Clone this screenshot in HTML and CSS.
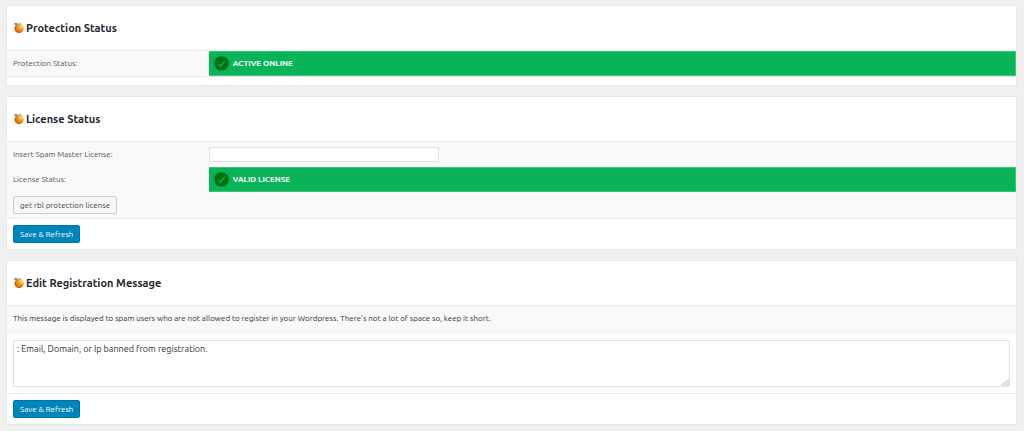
FILE: index.html
```html
<!DOCTYPE html>
<html lang="en">
<head>
    <meta charset="UTF-8">
    <meta name="viewport" content="width=device-width, initial-scale=1.0">
    <title>Spam Master Settings</title>
    <link rel="stylesheet" href="styles.css">
</head>
<body>
    <svg class="symbols" aria-hidden="true">
        <defs>
            <radialGradient id="peel" cx="0.7" cy="0.3" r="0.8">
                <stop offset="0" stop-color="#ffc93a"/>
                <stop offset="0.5" stop-color="#f08a20"/>
                <stop offset="1" stop-color="#c4500f"/>
            </radialGradient>
        </defs>
        <symbol id="orange" viewBox="0 0 20 24">
            <circle cx="11" cy="12" r="8.6" fill="url(#peel)"/>
            <path d="M12 7c3 0 5 2 5 5" fill="none" stroke="#ffdc7a" stroke-width="2"/>
            <path d="M10 5C8 1 4 0 1 4c3 2 6 3 9 1z" fill="#7fa67c"/>
            <path d="M10 5c0-3 3-4 5-3-1 3-2 4-5 3z" fill="#b5bd80"/>
        </symbol>
        <symbol id="check" viewBox="0 0 16 16">
            <circle cx="8" cy="8" r="7.8" fill="#04700f"/>
            <path d="M4.5 8.5l2.3 2.7 4.7-6" fill="none" stroke="#08b457" stroke-width="1.3"/>
        </symbol>
    </svg>

    <section class="panel">
        <header class="panel-header">
            <svg class="logo"><use href="#orange"/></svg>
            <h2>Protection Status</h2>
        </header>
        <div class="panel-body">
            <div class="row">
                <span class="label">Protection Status:</span>
                <div class="status"><svg class="check"><use href="#check"/></svg>ACTIVE ONLINE</div>
            </div>
        </div>
        <footer class="panel-footer empty"></footer>
    </section>

    <form class="panel">
        <header class="panel-header">
            <svg class="logo"><use href="#orange"/></svg>
            <h2>License Status</h2>
        </header>
        <div class="panel-body">
            <div class="row">
                <label class="label" for="license">Insert Spam Master License:</label>
                <input class="text-input" type="text" id="license">
            </div>
            <div class="row">
                <span class="label">License Status:</span>
                <div class="status"><svg class="check"><use href="#check"/></svg>VALID LICENSE</div>
            </div>
            <div class="actions">
                <button type="button" class="button">get rbl protection license</button>
            </div>
        </div>
        <footer class="panel-footer">
            <button type="submit" class="button primary">Save &amp; Refresh</button>
        </footer>
    </form>

    <form class="panel">
        <header class="panel-header">
            <svg class="logo"><use href="#orange"/></svg>
            <h2>Edit Registration Message</h2>
        </header>
        <div class="panel-body">
            <label class="description" for="message">This message is displayed to spam users who are not allowed to register in your Wordpress. There's not a lot of space so, keep it short.</label>
        </div>
        <div class="message">
            <textarea id="message">: Email, Domain, or Ip banned from registration.</textarea>
        </div>
        <footer class="panel-footer">
            <button type="submit" class="button primary">Save &amp; Refresh</button>
        </footer>
    </form>
</body>
</html>
```
FILE: styles.css
```css
* {
    box-sizing: border-box;
}
body {
    margin: 0;
    padding: 5px 7px 6px 6px;
    background: #f0f0f0;
    color: #333;
    font-family: Ubuntu, "Noto Sans", sans-serif;
    font-size: 8px;
    line-height: 12px;
}
.symbols {
    display: block;
    width: 0;
    height: 0;
}
.panel {
    margin: 0 0 10px;
    background: #fff;
    border: 1px solid #e8e8e8;
}
.panel-header {
    display: flex;
    align-items: center;
    gap: 2px;
    height: 45px;
    padding: 0 6px;
    border-bottom: 1px solid #ebebeb;
}
.panel-header h2 {
    margin: 0;
    color: #23282d;
    font-size: 11px;
    line-height: 16px;
}
.logo {
    width: 11px;
    height: 13px;
}
.panel-body {
    background: #f9f9f9;
}
.row {
    display: grid;
    grid-template-columns: 20% 1fr;
    align-items: center;
    min-height: 25px;
}
.label {
    padding-left: 6px;
    color: #555;
}
.status {
    display: flex;
    align-items: center;
    gap: 4px;
    height: 25px;
    padding-left: 5px;
    background: #08b457;
    border: 1px solid #3cc279;
    border-left: 0;
    color: #fff;
    font-weight: bold;
}
.check {
    width: 15px;
    height: 15px;
}
.text-input {
    width: 230px;
    height: 15px;
    padding: 0 3px;
    background: #fff;
    border: 1px solid #e3e3e3;
    font: inherit;
}
.actions {
    padding: 4px 6px;
}
.button {
    display: block;
    height: 18px;
    padding: 2px 6px 0;
    background: #f7f7f7;
    border: 1px solid #ccc;
    border-radius: 2px;
    color: #444;
    font: inherit;
    cursor: pointer;
}
.button.primary {
    background: #0085ba;
    border-color: #0073aa;
    color: #fff;
}
.panel-footer {
    padding: 6px;
    border-top: 1px solid #ebebeb;
}
.panel-footer.empty {
    padding: 4px;
}
.description {
    display: block;
    padding: 7px 6px 10px;
}
.message {
    padding: 5px 6px 6px;
}
.message textarea {
    display: block;
    width: 100%;
    height: 47px;
    padding: 2px 3px;
    background: #fff;
    border: 1px solid #e3e3e3;
    color: #333;
    font: inherit;
    font-size: 9px;
}
.message textarea::-webkit-resizer {
    background: linear-gradient(135deg, transparent 70%, #e3e3e3 70%);
}
```
